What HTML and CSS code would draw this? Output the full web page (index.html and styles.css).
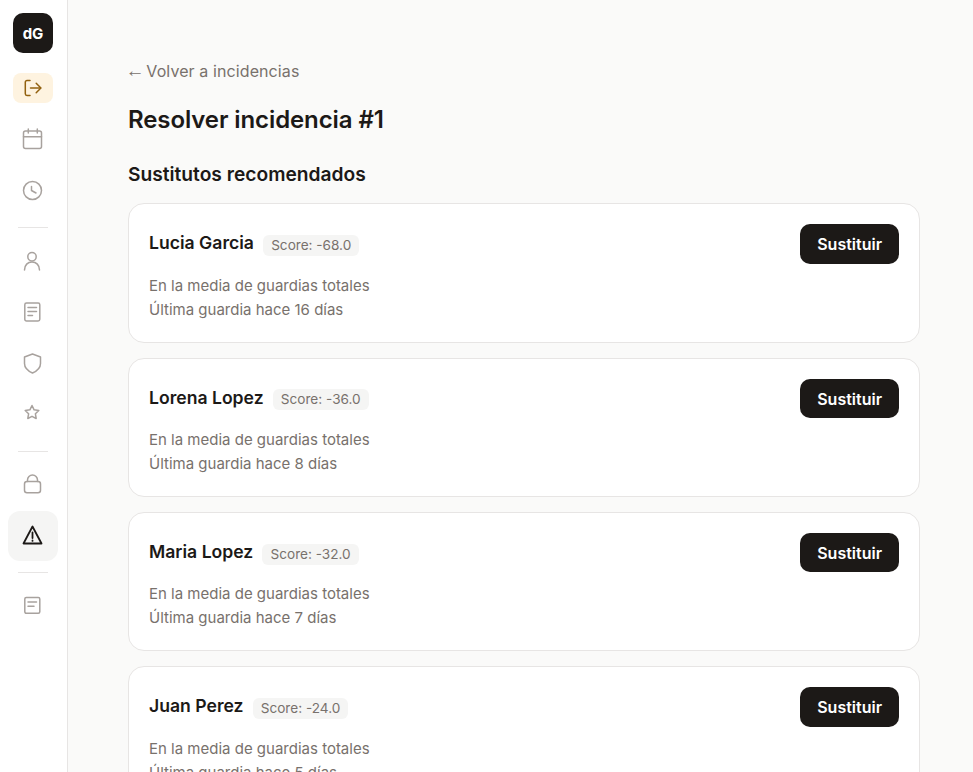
FILE: index.html
```html
<!DOCTYPE html>
<html lang="es">
<head>
<meta charset="utf-8">
<title>Resolver incidencia #1</title>
<link rel="stylesheet" href="styles.css">
</head>
<body>
<div class="app">
  <aside class="sidebar">
    <div class="logo">dG</div>
    <a class="nav-item"><span class="pill"><svg viewBox="0 0 24 24" class="icon"><path d="M9 4.500H6a1.700 1.700 0 0 0-1.700 1.700v11.600A1.700 1.700 0 0 0 6 19.500h3"/><path d="M9.500 12h10"/><path d="m15.200 7.300 4.700 4.700-4.700 4.700"/></svg></span></a>
    <a class="nav-item"><svg viewBox="0 0 24 24" class="icon"><rect x="2.500" y="4" width="18" height="17.500" rx="2"/><path d="M2.500 9.700h18M7.300 2v4M16.300 2v4"/></svg></a>
    <a class="nav-item"><svg viewBox="0 0 24 24" class="icon"><circle cx="11.500" cy="12.500" r="9"/><path d="M10.500 8.500v4l4.500 2.500"/></svg></a>
    <div class="divider"></div>
    <a class="nav-item"><svg viewBox="0 0 24 24" class="icon"><circle cx="11" cy="7.700" r="4.200"/><path d="M3.500 21c0-5 3.300-8 7.500-8s7.500 3 7.500 8"/></svg></a>
    <a class="nav-item"><svg viewBox="0 0 24 24" class="icon"><rect x="3.800" y="3" width="15" height="18" rx="1.700"/><path d="M7 7.500h8.500M7 11.500h8.500M7 15.500h4.500"/></svg></a>
    <a class="nav-item"><svg viewBox="0 0 24 24" class="icon"><path d="M11.500 3l8 3v6.500c0 4.500-3.500 7.500-8 9.500-4.500-2-8-5-8-9.500V6z"/></svg></a>
    <a class="nav-item"><svg viewBox="0 0 24 24" class="icon"><path d="M11 3.500l2.100 4.300 4.700.7-3.400 3.300.8 4.700-4.200-2.200-4.200 2.200.8-4.700-3.400-3.300 4.700-.7z"/></svg></a>
    <div class="divider"></div>
    <a class="nav-item"><svg viewBox="0 0 24 24" class="icon"><rect x="3.500" y="8.500" width="16" height="11.200" rx="2.500"/><path d="M6.500 8.500V7a5 5 0 0 1 10 0v1.500"/></svg></a>
    <a class="nav-item current"><svg viewBox="0 0 24 24" class="icon icon-strong"><path d="M11.500 2.500 2.500 19.500h18z"/><path d="M11.500 8.500v5.500M11.500 16.500v.4"/></svg></a>
    <div class="divider"></div>
    <a class="nav-item"><svg viewBox="0 0 24 24" class="icon"><rect x="3.800" y="3.500" width="15" height="15.800" rx="1.500"/><path d="M7 8h8.500M7 12.200h6"/></svg></a>
  </aside>
  <main class="main">
    <a class="back"><span class="arrow">←</span> Volver a incidencias</a>
    <h1 class="title">Resolver incidencia #1</h1>
    <h2 class="subtitle">Sustitutos recomendados</h2>
    <div class="cards">
      <article class="card">
        <div class="card-head">
          <div class="who"><span class="name">Lucia Garcia</span><span class="score">Score: -68.0</span></div>
          <button class="btn">Sustituir</button>
        </div>
        <p class="line">En la media de guardias totales</p>
        <p class="line">Última guardia hace 16 días</p>
      </article>
      <article class="card">
        <div class="card-head">
          <div class="who"><span class="name">Lorena Lopez</span><span class="score">Score: -36.0</span></div>
          <button class="btn">Sustituir</button>
        </div>
        <p class="line">En la media de guardias totales</p>
        <p class="line">Última guardia hace 8 días</p>
      </article>
      <article class="card">
        <div class="card-head">
          <div class="who"><span class="name">Maria Lopez</span><span class="score">Score: -32.0</span></div>
          <button class="btn">Sustituir</button>
        </div>
        <p class="line">En la media de guardias totales</p>
        <p class="line">Última guardia hace 7 días</p>
      </article>
      <article class="card">
        <div class="card-head">
          <div class="who"><span class="name">Juan Perez</span><span class="score">Score: -24.0</span></div>
          <button class="btn">Sustituir</button>
        </div>
        <p class="line">En la media de guardias totales</p>
        <p class="line">Última guardia hace 5 días</p>
      </article>
    </div>
  </main>
</div>
</body>
</html>
```
FILE: styles.css
```css
* { box-sizing: border-box; }
html, body { margin: 0; padding: 0; height: 100%; overflow: hidden; }
body { font-family: Inter, "Liberation Sans", sans-serif; background: #fafaf9; color: #1c1917; }
.app { display: flex; height: 100vh; overflow: hidden; }
.sidebar { width: 68px; flex: none; background: #fff; border-right: 1px solid #e7e5e4; display: flex; flex-direction: column; align-items: center; padding: 13px 9px 0 8px; }
.logo { width: 40px; height: 40px; flex: none; border-radius: 10px; background: #1c1917; color: #fff; font-weight: 700; font-size: 15px; display: flex; align-items: center; justify-content: center; margin-bottom: 10px; }
.nav-item { width: 50px; height: 50px; flex: none; margin-bottom: 1px; border-radius: 12px; display: flex; align-items: center; justify-content: center; color: #a8a29e; }
.nav-item.current { background: #f5f5f4; color: #1c1917; margin-bottom: 0; }
.pill { width: 40px; height: 30px; border-radius: 8px; background: #fef3e0; color: #92610f; display: flex; align-items: center; justify-content: center; }
.icon { width: 24px; height: 24px; fill: none; stroke: currentColor; stroke-width: 1.5; stroke-linecap: round; stroke-linejoin: round; }
.icon-strong { stroke-width: 1.8; }
.divider { width: 30px; height: 1px; flex: none; background: #e7e5e4; margin: 11px 0 8px; }
.main { flex: 1; min-width: 0; padding: 59px 53px 0 60px; }
.back { display: block; font-size: 16px; line-height: 24px; color: #78716c; letter-spacing: 0.1px; }
.arrow { font-family: "Liberation Sans", sans-serif; font-size: 19px; line-height: 0; letter-spacing: -2.800px; margin-left: -2.500px; }
.title { margin: 21px 0 0; font-size: 24px; line-height: 32px; font-weight: 600; letter-spacing: -0.1px; }
.subtitle { margin: 25px 0 0; font-size: 19.200px; line-height: 26px; font-weight: 600; }
.cards { display: flex; flex-direction: column; gap: 15px; margin-top: 16.200px; }
.card { background: #fff; border: 1px solid #e7e5e4; border-radius: 16px; padding: 20px; }
.card-head { display: flex; align-items: center; justify-content: space-between; margin-bottom: 10px; }
.who { display: flex; align-items: center; gap: 9px; }
.name { font-size: 17.600px; font-weight: 600; line-height: 24px; margin-bottom: 1.500px; }
.score { font-size: 13.600px; line-height: 21px; padding: 0 8.200px; border-radius: 6px; background: #f5f5f4; color: #78716c; margin-top: 3px; }
.btn { border: 0; background: #1c1917; color: #fff; font: 600 16px/24px Inter, "Liberation Sans", sans-serif; padding: 8px 17px; height: 39.400px; border-radius: 10px; }
.line { margin: 0; font-size: 15px; line-height: 24px; color: #78716c; }
```
